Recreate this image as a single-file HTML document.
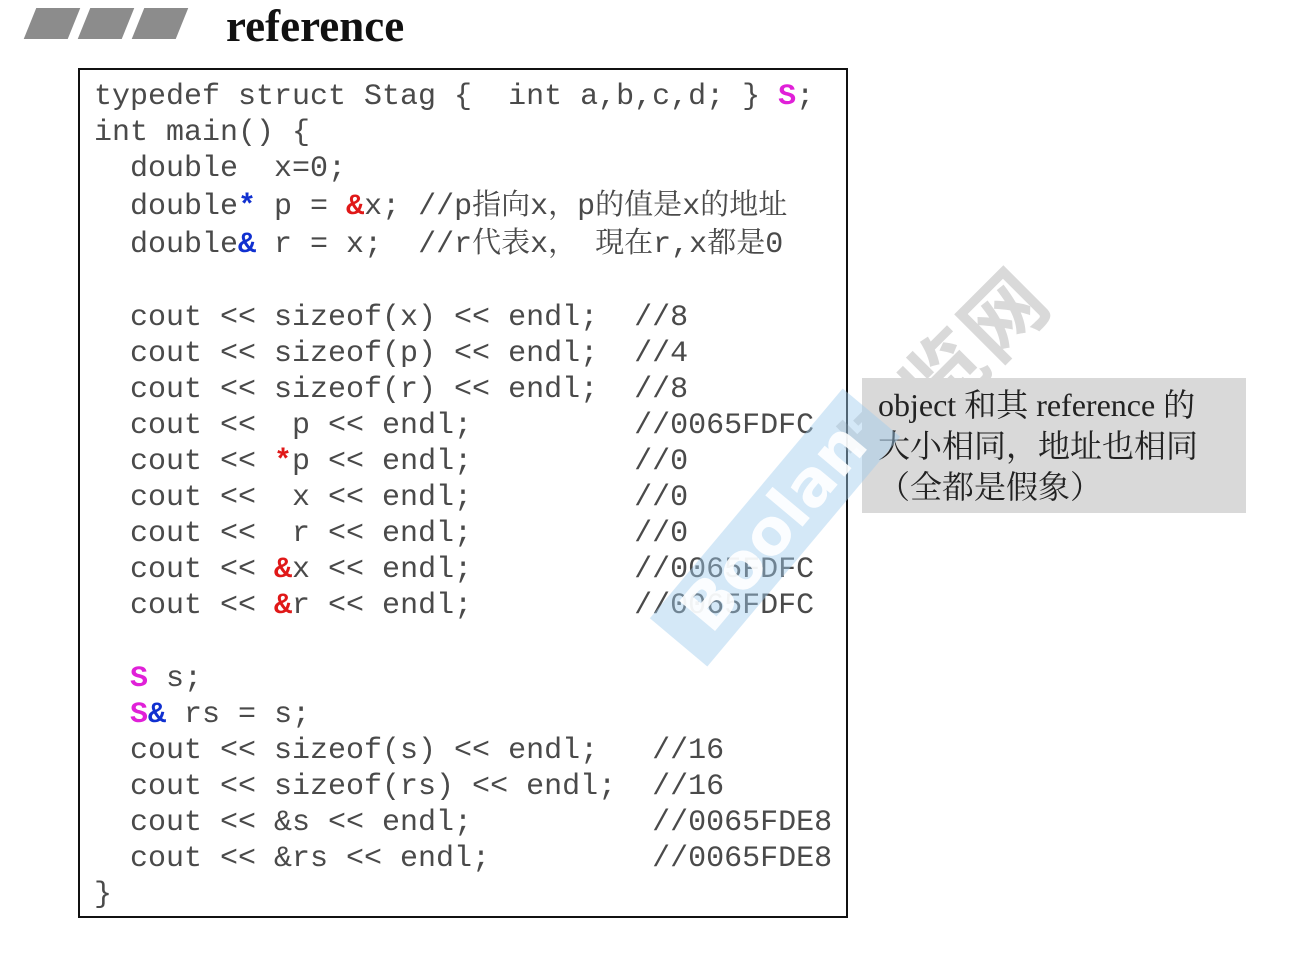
<!DOCTYPE html>
<html><head><meta charset="utf-8"><style>
body{margin:0;width:1295px;height:962px;background:#fff;position:relative;overflow:hidden}
.par{position:absolute;top:8px;width:44px;height:31px;background:#8c8c8c;transform:skewX(-22deg)}
.title{position:absolute;left:226px;top:0px;font:bold 45px "Liberation Serif",serif;color:#111}
.box{position:absolute;left:78px;top:68px;width:766px;height:846px;border:2px solid #111}
pre{position:absolute;left:94px;top:79px;margin:0;font:30px/36.1px "Liberation Mono","Noto Serif CJK SC",monospace;color:#4a4a4a}
.c{font-family:"Liberation Serif","Noto Serif CJK SC",serif;font-size:29px}
.m{color:#e020d8;font-weight:bold}.r{color:#e01818;font-weight:bold}.b{color:#1030d0;font-weight:bold}
.note{position:absolute;left:862px;top:378px;width:384px;height:135px;background:#d9d9d9;font:32px/41px "Liberation Serif","Noto Serif CJK SC",serif;color:#222;padding:7px 0 0 16px;box-sizing:border-box;white-space:nowrap}
.wm{position:absolute;left:625px;top:490px;width:300px;height:75px;background:rgba(160,205,238,.45);transform:rotate(-50deg);color:rgba(255,255,255,.9);font:bold 64px/75px "DejaVu Sans",sans-serif;text-align:center}
.wm2{position:absolute;left:815px;top:310px;transform:rotate(-45deg);font:bold 82px "Noto Sans CJK SC",sans-serif;color:rgba(130,130,130,.3);letter-spacing:2px}
</style></head><body>
<div class="par" style="left:30px"></div><div class="par" style="left:84px"></div><div class="par" style="left:138px"></div>
<div class="title">reference</div>
<div class="box"></div>
<div class="wm2">博览网</div>
<pre>typedef struct Stag {  int a,b,c,d; } <span class="m">S</span>;
int main() {
  double  x=0;
  double<span class="b">*</span> p = <span class="r">&amp;</span>x; //p<span class="c">指向</span>x<span class="c">，</span>p<span class="c">的值是</span>x<span class="c">的地址</span>
  double<span class="b">&amp;</span> r = x;  //r<span class="c">代表</span>x<span class="c">，</span> <span class="c">現在</span>r,x<span class="c">都是</span>0

  cout &lt;&lt; sizeof(x) &lt;&lt; endl;  //8
  cout &lt;&lt; sizeof(p) &lt;&lt; endl;  //4
  cout &lt;&lt; sizeof(r) &lt;&lt; endl;  //8
  cout &lt;&lt;  p &lt;&lt; endl;         //0065FDFC
  cout &lt;&lt; <span class="r">*</span>p &lt;&lt; endl;         //0
  cout &lt;&lt;  x &lt;&lt; endl;         //0
  cout &lt;&lt;  r &lt;&lt; endl;         //0
  cout &lt;&lt; <span class="r">&amp;</span>x &lt;&lt; endl;         //0065FDFC
  cout &lt;&lt; <span class="r">&amp;</span>r &lt;&lt; endl;         //0065FDFC

  <span class="m">S</span> s;
  <span class="m">S</span><span class="b">&amp;</span> rs = s;
  cout &lt;&lt; sizeof(s) &lt;&lt; endl;   //16
  cout &lt;&lt; sizeof(rs) &lt;&lt; endl;  //16
  cout &lt;&lt; &amp;s &lt;&lt; endl;          //0065FDE8
  cout &lt;&lt; &amp;rs &lt;&lt; endl;         //0065FDE8
}</pre>
<div class="note">object 和其 reference 的<br>大小相同，地址也相同<br>（全都是假象）</div>
<div class="wm">Boolan</div>
</body></html>
